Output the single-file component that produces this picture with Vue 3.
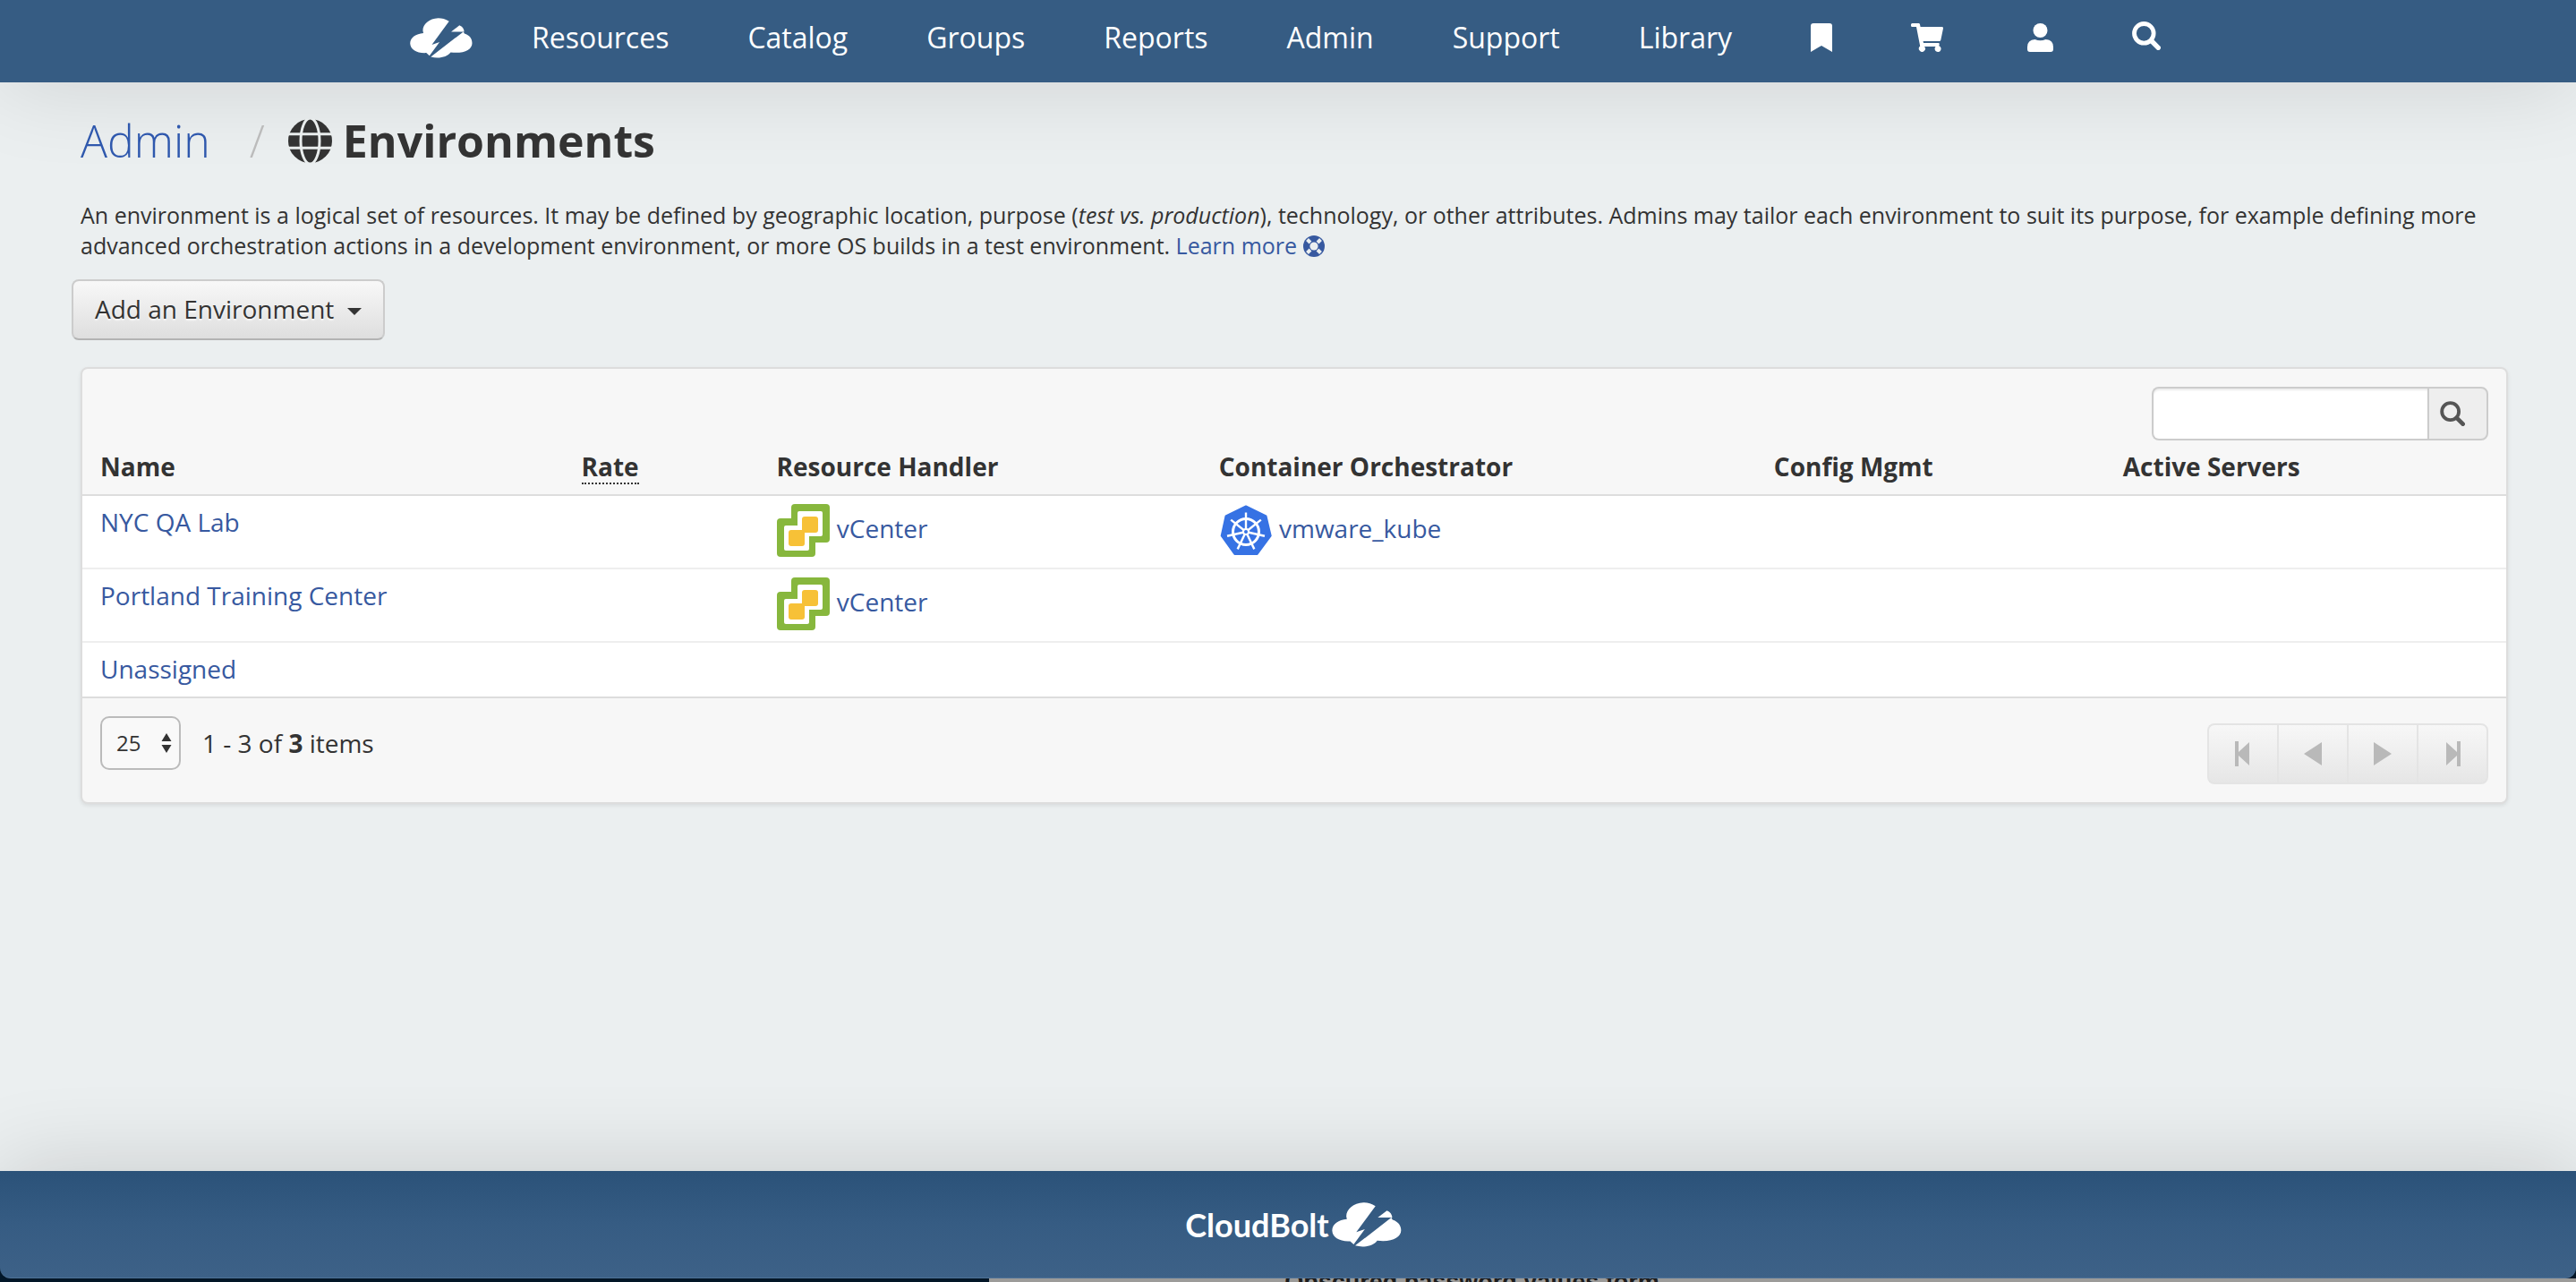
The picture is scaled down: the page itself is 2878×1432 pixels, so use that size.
<script setup>
import { ref } from 'vue'

const navItems = ['Resources', 'Catalog', 'Groups', 'Reports', 'Admin', 'Support', 'Library']

const environments = [
  { name: 'NYC QA Lab', handler: 'vCenter', orchestrator: 'vmware_kube' },
  { name: 'Portland Training Center', handler: 'vCenter', orchestrator: '' },
  { name: 'Unassigned', handler: '', orchestrator: '' },
]

const query = ref('')
const pageSize = ref('25')
</script>

<template>
  <div class="page">
    <header class="topbar">
      <nav class="nav" aria-label="Main">
        <a href="#" class="brand" aria-label="Home">
          <svg class="cloud" viewBox="864 188 235 152" aria-hidden="true">
            <path d="M1011 201C998 192 984 189 970 189C936 190 912 212 912 236L914 245C886 247 864 262 864 284C865 308 890 322 925 320L937 331L975 279L946 289Z" />
            <path d="M942 335L1065 240L1069 247C1088 253 1098 266 1098 283C1098 308 1066 324 1017 318C1004 336 972 343 942 335Z" />
            <path d="M1019 240L1050 216C1061 220 1067 229 1068 240Z" />
          </svg>
        </a>
        <a v-for="item in navItems" :key="item" href="#" class="nav-link">{{ item }}</a>
        <a href="#" class="nav-icon" aria-label="Bookmarks">
          <svg width="24" height="32" viewBox="0 0 24 32"><path d="M0 32V3Q0 0 3 0H21Q24 0 24 3V32L12 25Z" /></svg>
        </a>
        <a href="#" class="nav-icon cart" aria-label="Cart">
          <svg width="36" height="32" viewBox="0 0 36 32">
            <path d="M1.500 0H8.500Q9.700 0 10 1.200L10.600 4H34.500Q36.300 4 36 5.800L33.300 18.700Q33 20 31.700 20H13.600L14 22H30.600Q32 22 31.700 23.400L31.300 25.200A3.500 3.500 0 1 1 27.600 26H15A3.500 3.500 0 1 1 10.200 25.600L6 4H1.500Q0 4 0 2.500V1.500Q0 0 1.500 0Z" />
          </svg>
        </a>
        <a href="#" class="nav-icon" aria-label="Profile">
          <svg width="29" height="32" viewBox="0 0 29 32">
            <circle cx="14.500" cy="8" r="8" />
            <path d="M8.500 18Q11.500 19.300 14.500 19.300T20.500 18Q29 18.500 29 26.500V29Q29 32 26 32H3Q0 32 0 29V26.500Q0 18.500 8.500 18Z" />
          </svg>
        </a>
        <a href="#" class="nav-icon raised" aria-label="Search">
          <svg class="lens" width="32" height="32" viewBox="0 0 32 32">
            <circle cx="13.300" cy="13.300" r="10.800" stroke-width="4.800" />
            <path d="M21.500 21.500L29.300 29.300" stroke-width="5.400" />
          </svg>
        </a>
      </nav>
    </header>

    <main class="content">
      <h1 class="title">
        <a href="#" class="crumb">Admin</a>
        <span class="slash">/</span>
        <svg class="globe" width="49" height="49" viewBox="0 0 49 49" aria-hidden="true">
          <circle class="disc" cx="24.500" cy="24.500" r="24.500" />
          <ellipse cx="24.500" cy="24.500" rx="10.500" ry="25.500" />
          <path d="M0 16.800H49M0 32.200H49" />
        </svg>
        <span>Environments</span>
      </h1>

      <p class="intro">
        An environment is a logical set of resources. It may be defined by geographic location, purpose (<em>test vs. production</em>), technology, or other attributes. Admins may tailor each environment to suit its purpose, for example defining more advanced orchestration actions in a development environment, or more OS builds in a test environment.
        <a href="#">Learn more
          <svg class="ring" width="24" height="24" viewBox="0 0 24 24" aria-hidden="true">
            <circle cx="12" cy="12" r="12" />
            <path d="M4.500 4.500L8 8M19.500 4.500L16 8M4.500 19.500L8 16M19.500 19.500L16 16" />
            <circle class="hole" cx="12" cy="12" r="4.600" />
          </svg></a>
      </p>

      <button type="button" class="add">Add an Environment<span class="caret"></span></button>

      <section class="panel">
        <form class="toolbar" role="search" @submit.prevent>
          <input v-model="query" class="search-input" type="text" aria-label="Search environments" />
          <button type="submit" class="search-button" aria-label="Search">
            <svg class="lens" width="28" height="28" viewBox="0 0 32 32">
              <circle cx="13.300" cy="13.300" r="10.800" stroke-width="4.400" />
              <path d="M21.500 21.500L29.300 29.300" stroke-width="5.400" />
            </svg>
          </button>
        </form>

        <table class="grid">
          <colgroup>
            <col class="c-name" /><col class="c-rate" /><col class="c-handler" />
            <col class="c-orch" /><col class="c-config" /><col />
          </colgroup>
          <thead>
            <tr>
              <th scope="col">Name</th>
              <th scope="col"><span class="dotted">Rate</span></th>
              <th scope="col">Resource Handler</th>
              <th scope="col">Container Orchestrator</th>
              <th scope="col">Config Mgmt</th>
              <th scope="col">Active Servers</th>
            </tr>
          </thead>
          <tbody>
            <tr v-for="env in environments" :key="env.name">
              <td><a href="#">{{ env.name }}</a></td>
              <td></td>
              <td>
                <a v-if="env.handler" href="#"><svg class="logo" viewBox="0 0 60 60" aria-hidden="true">
                  <g fill="#87b73d"><rect x="16" width="43" height="43" rx="4" /><rect y="16" width="43" height="43" rx="4" /></g>
                  <g fill="#fff"><rect x="23" y="8" width="28" height="28" rx="2" /><rect x="8" y="24" width="28" height="28" rx="2" /></g>
                  <g fill="#f7c137"><rect x="28" y="14" width="18" height="18" rx="3" /><rect x="13" y="29" width="18" height="18" rx="3" /></g>
                </svg> {{ env.handler }}</a>
              </td>
              <td>
                <a v-if="env.orchestrator" href="#"><svg class="logo" viewBox="0 0 60 60" aria-hidden="true">
                  <path fill="#3672e4" stroke="#3672e4" stroke-width="2" stroke-linejoin="round" d="M30 2.500L52.500 13.500L57.700 35.500L42.600 56H17.400L2.700 35.500L7.500 13.500Z" />
                  <g fill="none" stroke="#fff" stroke-width="3">
                    <circle cx="30" cy="31" r="14.500" />
                    <path v-for="n in 7" :key="n" :transform="`rotate(${(n * 360) / 7} 30 31)`" stroke-width="2.400" d="M30 31V9.500" />
                  </g>
                  <circle cx="30" cy="31" r="4" fill="#fff" />
                  <circle cx="30" cy="31" r="2" fill="#3672e4" />
                </svg> {{ env.orchestrator }}</a>
              </td>
              <td></td>
              <td></td>
            </tr>
          </tbody>
        </table>

        <div class="footerbar">
          <div class="count">
            <span class="select-wrap">
              <select v-model="pageSize" aria-label="Items per page">
                <option>25</option>
                <option>50</option>
                <option>100</option>
              </select>
              <svg class="arrows" width="12" height="22" viewBox="0 0 12 22" aria-hidden="true"><path d="M6 0L11.500 9H.5ZM6 22L11.500 13H.5Z" /></svg>
            </span>
            <span>1 - 3 of <b>3</b> items</span>
          </div>
          <div class="pager">
            <button type="button" disabled aria-label="First page">
              <svg width="20" height="28" viewBox="0 0 20 28"><path d="M1 0H5V12L17 1V27L5 16V28H1Z" /></svg>
            </button>
            <button type="button" disabled aria-label="Previous page">
              <svg width="20" height="28" viewBox="0 0 20 28"><path d="M20 1V27L0 14Z" /></svg>
            </button>
            <button type="button" disabled aria-label="Next page">
              <svg width="20" height="28" viewBox="0 0 20 28"><path d="M0 1V27L20 14Z" /></svg>
            </button>
            <button type="button" disabled aria-label="Last page">
              <svg width="20" height="28" viewBox="0 0 20 28"><path d="M19 0H15V12L3 1V27L15 16V28H19Z" /></svg>
            </button>
          </div>
        </div>
      </section>
    </main>

    <div class="base">
      <footer class="foot">
        <span class="wordmark">CloudBolt</span>
        <svg class="cloud big" viewBox="864 188 235 152" aria-hidden="true">
          <path d="M1011 201C998 192 984 189 970 189C936 190 912 212 912 236L914 245C886 247 864 262 864 284C865 308 890 322 925 320L937 331L975 279L946 289Z" />
          <path d="M942 335L1065 240L1069 247C1088 253 1098 266 1098 283C1098 308 1066 324 1017 318C1004 336 972 343 942 335Z" />
          <path d="M1019 240L1050 216C1061 220 1067 229 1068 240Z" />
        </svg>
      </footer>
      <div class="behind">
        <div class="behind-window">Obscured password values form</div>
      </div>
    </div>
  </div>
</template>

<style>
body {
  margin: 0;
  background: #ebeff0;
}
</style>

<style scoped>
.page {
  display: flex;
  flex-direction: column;
  min-height: 100vh;
  overflow: hidden;
  background: #ebeff0;
  color: #333;
  font: 28px/40px "Open Sans", sans-serif;
}
a {
  color: #3759a0;
  text-decoration: none;
}
.topbar {
  padding: 20px 6px 28px 0;
  background: #365c83;
  box-shadow: 0 0 100px rgba(0, 0, 0, 0.13);
}
.nav {
  display: flex;
  justify-content: center;
  align-items: center;
  gap: 88px;
  height: 44px;
}
.nav a {
  display: flex;
  color: #fff;
}
.nav .brand {
  margin-right: -22px;
}
.nav-link {
  font-size: 32px;
  line-height: 44px;
}
.nav-icon svg {
  fill: currentColor;
}
.cart {
  margin-right: 6px;
}
.raised {
  margin-bottom: 4px;
}
.nav-icon .lens,
.lens {
  fill: none;
  stroke: currentColor;
  stroke-linecap: round;
}
.cloud {
  width: 70px;
  height: 45px;
  fill: #fff;
}
.cloud.big {
  width: 78px;
  height: 50px;
}
.content {
  position: relative;
  flex: 1;
  padding: 31px 76px 30px 90px;
}
.title {
  display: flex;
  align-items: center;
  margin: 0 0 32px;
  font-size: 50px;
  line-height: 68px;
  font-weight: 700;
}
.crumb {
  color: #2f58ad;
  font-weight: 300;
}
.slash {
  margin: 0 26px 0 44px;
  color: #bbb;
  font-weight: 300;
}
.globe {
  margin-right: 12px;
  fill: none;
  stroke: #e9eded;
  stroke-width: 3;
}
.globe .disc {
  fill: #333;
  stroke: none;
}
.intro {
  margin: 0 0 21px;
  font-size: 25px;
  line-height: 34px;
}
.ring {
  vertical-align: -3px;
  fill: #3759a0;
}
.ring path {
  stroke: #ebeff0;
  stroke-width: 4;
}
.ring .hole {
  fill: #ebeff0;
}
.add {
  display: flex;
  align-items: center;
  gap: 15px;
  height: 68px;
  margin: 0 0 30px -10px;
  padding: 0 24px 2px;
  border: 2px solid #ccc;
  border-bottom-color: #b3b3b3;
  border-radius: 8px;
  background: linear-gradient(#f8f8f8, #dedede);
  color: #333;
  font: inherit;
  text-shadow: 0 2px 2px rgba(255, 255, 255, 0.75);
}
.caret {
  margin-top: 6px;
  border: 8px solid transparent;
  border-top-color: #333;
  border-bottom: 0;
}
.panel {
  border: 2px solid #ddd;
  border-radius: 8px;
  background: #f7f7f7;
  box-shadow: 0 2px 4px rgba(0, 0, 0, 0.08);
}
.toolbar {
  display: flex;
  justify-content: flex-end;
  padding: 20px 20px 0;
}
.search-input {
  box-sizing: border-box;
  width: 308px;
  height: 60px;
  padding: 0 12px;
  border: 2px solid #ccc;
  border-right: 0;
  border-radius: 8px 0 0 8px;
  background: #fff;
  box-shadow: inset 0 2px 2px rgba(0, 0, 0, 0.08);
  font: inherit;
}
.search-button {
  display: flex;
  align-items: center;
  width: 68px;
  height: 60px;
  padding: 0 12px;
  border: 2px solid #ccc;
  border-radius: 0 8px 8px 0;
  background: #eee;
  color: #555;
}
.grid {
  width: 100%;
  table-layout: fixed;
  border-collapse: separate;
  border-spacing: 0;
}
.c-name { width: 19.85%; }
.c-rate { width: 8.05%; }
.c-handler { width: 18.25%; }
.c-orch { width: 22.9%; }
.c-config { width: 14.4%; }
th,
td {
  padding: 9px 20px 11px;
  border-bottom: 2px solid #eee;
  text-align: left;
  vertical-align: top;
}
th,
tbody tr:last-child td {
  border-bottom-color: #ddd;
}
td {
  background: #fff;
}
td a {
  display: block;
}
.dotted {
  display: inline-block;
  height: 38px;
  border-bottom: 2px dotted #333;
}
.logo {
  width: 60px;
  height: 60px;
  vertical-align: middle;
}
.footerbar {
  display: flex;
  justify-content: space-between;
  align-items: flex-start;
  padding: 20px;
}
.count {
  display: flex;
  align-items: center;
  gap: 24px;
  height: 60px;
}
.select-wrap {
  position: relative;
  display: flex;
}
select {
  appearance: none;
  box-sizing: border-box;
  width: 90px;
  height: 60px;
  padding: 0 16px;
  border: 2px solid #bbb;
  border-radius: 10px;
  background: #f9f9f9;
  color: #333;
  font: 24px/34px "Open Sans", sans-serif;
}
.arrows {
  position: absolute;
  top: 19px;
  right: 10px;
  fill: #333;
  pointer-events: none;
}
.pager {
  display: flex;
  margin-top: 8px;
}
.pager button {
  display: flex;
  justify-content: center;
  align-items: center;
  box-sizing: border-box;
  width: 78px;
  height: 68px;
  padding: 0;
  border: solid #e4e4e4;
  border-width: 2px 0 2px 2px;
  background: linear-gradient(#f7f7f7, #e6e6e6);
}
.pager button:first-child {
  border-radius: 8px 0 0 8px;
}
.pager button:last-child {
  width: 80px;
  border-right-width: 2px;
  border-radius: 0 8px 8px 0;
}
.pager svg {
  fill: #b9b9b9;
}
.base {
  background: #03182b;
}
.foot {
  display: flex;
  justify-content: center;
  align-items: center;
  gap: 3px;
  box-sizing: border-box;
  height: 120px;
  padding-left: 12px;
  border-bottom: 1px solid #4e7196;
  border-radius: 0 0 12px 12px;
  background: linear-gradient(#2b5279, #365c83 50%, #3d6187);
  box-shadow: 0 0 100px rgba(0, 0, 0, 0.16);
}
.wordmark {
  color: #fff;
  font: 700 36px/48px Lato, sans-serif;
}
.behind {
  height: 4px;
  overflow: hidden;
}
.behind-window {
  margin-left: 38.4%;
  padding-left: 330px;
  background: #9c9b99;
  color: #1c1c1c;
  font: 700 27px/8px "Liberation Sans", sans-serif;
}
</style>
